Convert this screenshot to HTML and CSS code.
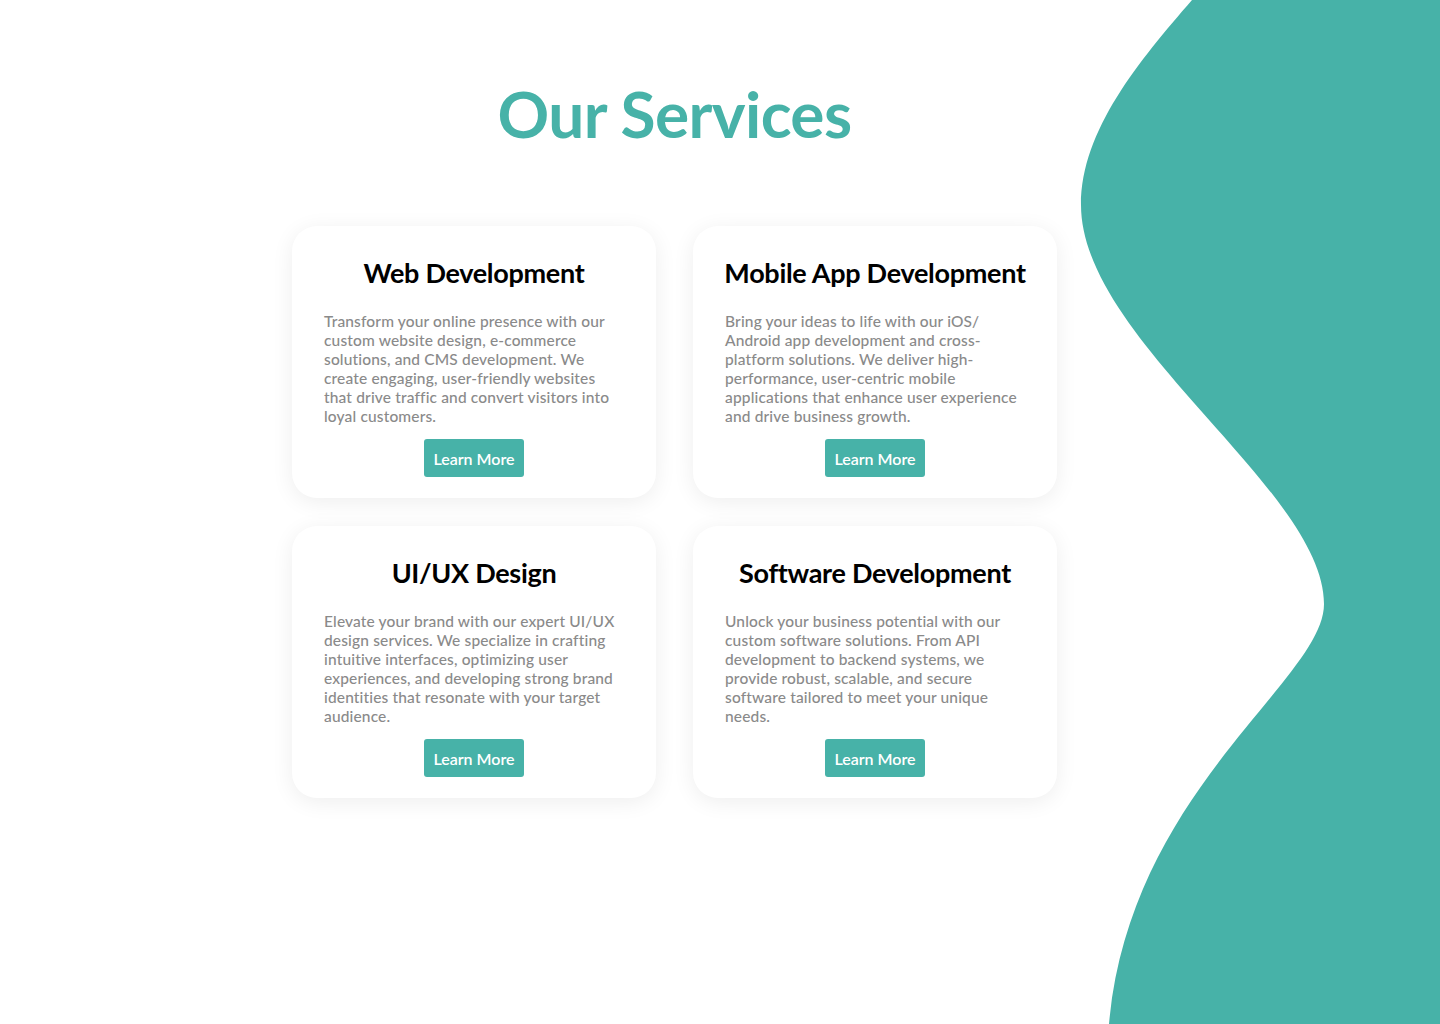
FILE: index.html
```html
<!DOCTYPE html>
<html lang="en">
<head>
<meta charset="utf-8">
<title>Our Services</title>
<link rel="stylesheet" href="styles.css">
</head>
<body>
<svg class="wave" viewBox="0 0 1440 1024" preserveAspectRatio="none" aria-hidden="true">
  <path d="M1192,0 C1140,60 1081,130 1081,205 C1081,340 1324,490 1324,604 C1324,680 1130,790 1109,1024 L1440,1024 L1440,0 Z" fill="#47b2a8"/>
</svg>
<main class="services">
  <h1 class="title">Our Services</h1>
  <div class="grid">
    <div class="card">
      <h2 class="card-title">Web Development</h2>
      <p class="card-text">Transform your online presence with our custom website design, e-commerce solutions, and CMS development. We create engaging, user-friendly websites that drive traffic and convert visitors into loyal customers.</p>
      <a class="btn" href="#">Learn More</a>
    </div>
    <div class="card">
      <h2 class="card-title">Mobile App Development</h2>
      <p class="card-text">Bring your ideas to life with our iOS/ Android app development and cross-platform solutions. We deliver high-performance, user-centric mobile applications that enhance user experience and drive business growth.</p>
      <a class="btn" href="#">Learn More</a>
    </div>
    <div class="card">
      <h2 class="card-title">UI/UX Design</h2>
      <p class="card-text">Elevate your brand with our expert UI/UX design services. We specialize in crafting intuitive interfaces, optimizing user experiences, and developing strong brand identities that resonate with your target audience.</p>
      <a class="btn" href="#">Learn More</a>
    </div>
    <div class="card">
      <h2 class="card-title">Software Development</h2>
      <p class="card-text">Unlock your business potential with our custom software solutions. From API development to backend systems, we provide robust, scalable, and secure software tailored to meet your unique needs.</p>
      <a class="btn" href="#">Learn More</a>
    </div>
  </div>
</main>
</body>
</html>
```
FILE: styles.css
```css
* { box-sizing: border-box; }
html, body { margin: 0; padding: 0; }
body {
  width: 1440px;
  height: 1024px;
  background: #ffffff;
  font-family: Lato, "Noto Sans", sans-serif;
  position: relative;
  overflow: hidden;
}
.wave {
  position: absolute;
  left: 0;
  top: 0;
  width: 1440px;
  height: 1024px;
  z-index: 0;
}
.services {
  position: relative;
  z-index: 1;
  width: 765px;
  margin-left: 292px;
  padding-top: 74px;
}
.title {
  margin: 0;
  text-align: center;
  font-size: 64px;
  line-height: 80px;
  font-weight: 700;
  color: #47b2a8;
  letter-spacing: -0.6px;
}
.grid {
  margin-top: 72px;
  display: grid;
  grid-template-columns: 364px 364px;
  column-gap: 37px;
  row-gap: 28px;
}
.card {
  background: #ffffff;
  border-radius: 25px;
  box-shadow: 0 4px 22px rgba(0, 0, 0, 0.07);
  padding: 30px 32px 20px;
  height: 272px;
  display: flex;
  flex-direction: column;
  align-items: center;
}
.card-title {
  margin: 0;
  font-size: 27px;
  line-height: 34px;
  font-weight: 700;
  color: #000;
  text-align: center;
  white-space: nowrap;
  letter-spacing: -0.3px;
}
.card-text {
  margin: 22px 0 0;
  align-self: stretch;
  font-size: 15.5px;
  line-height: 19px;
  letter-spacing: 0.15px;
  color: #8a8a8a;
  font-weight: 500;
}
.btn {
  margin-top: 13px;
  display: inline-flex;
  align-items: center;
  justify-content: center;
  width: 100px;
  height: 38px;
  background: #47b2a8;
  color: #ffffff;
  border-radius: 3px;
  font-size: 16px;
  font-weight: 600;
  text-decoration: none;
}
```
